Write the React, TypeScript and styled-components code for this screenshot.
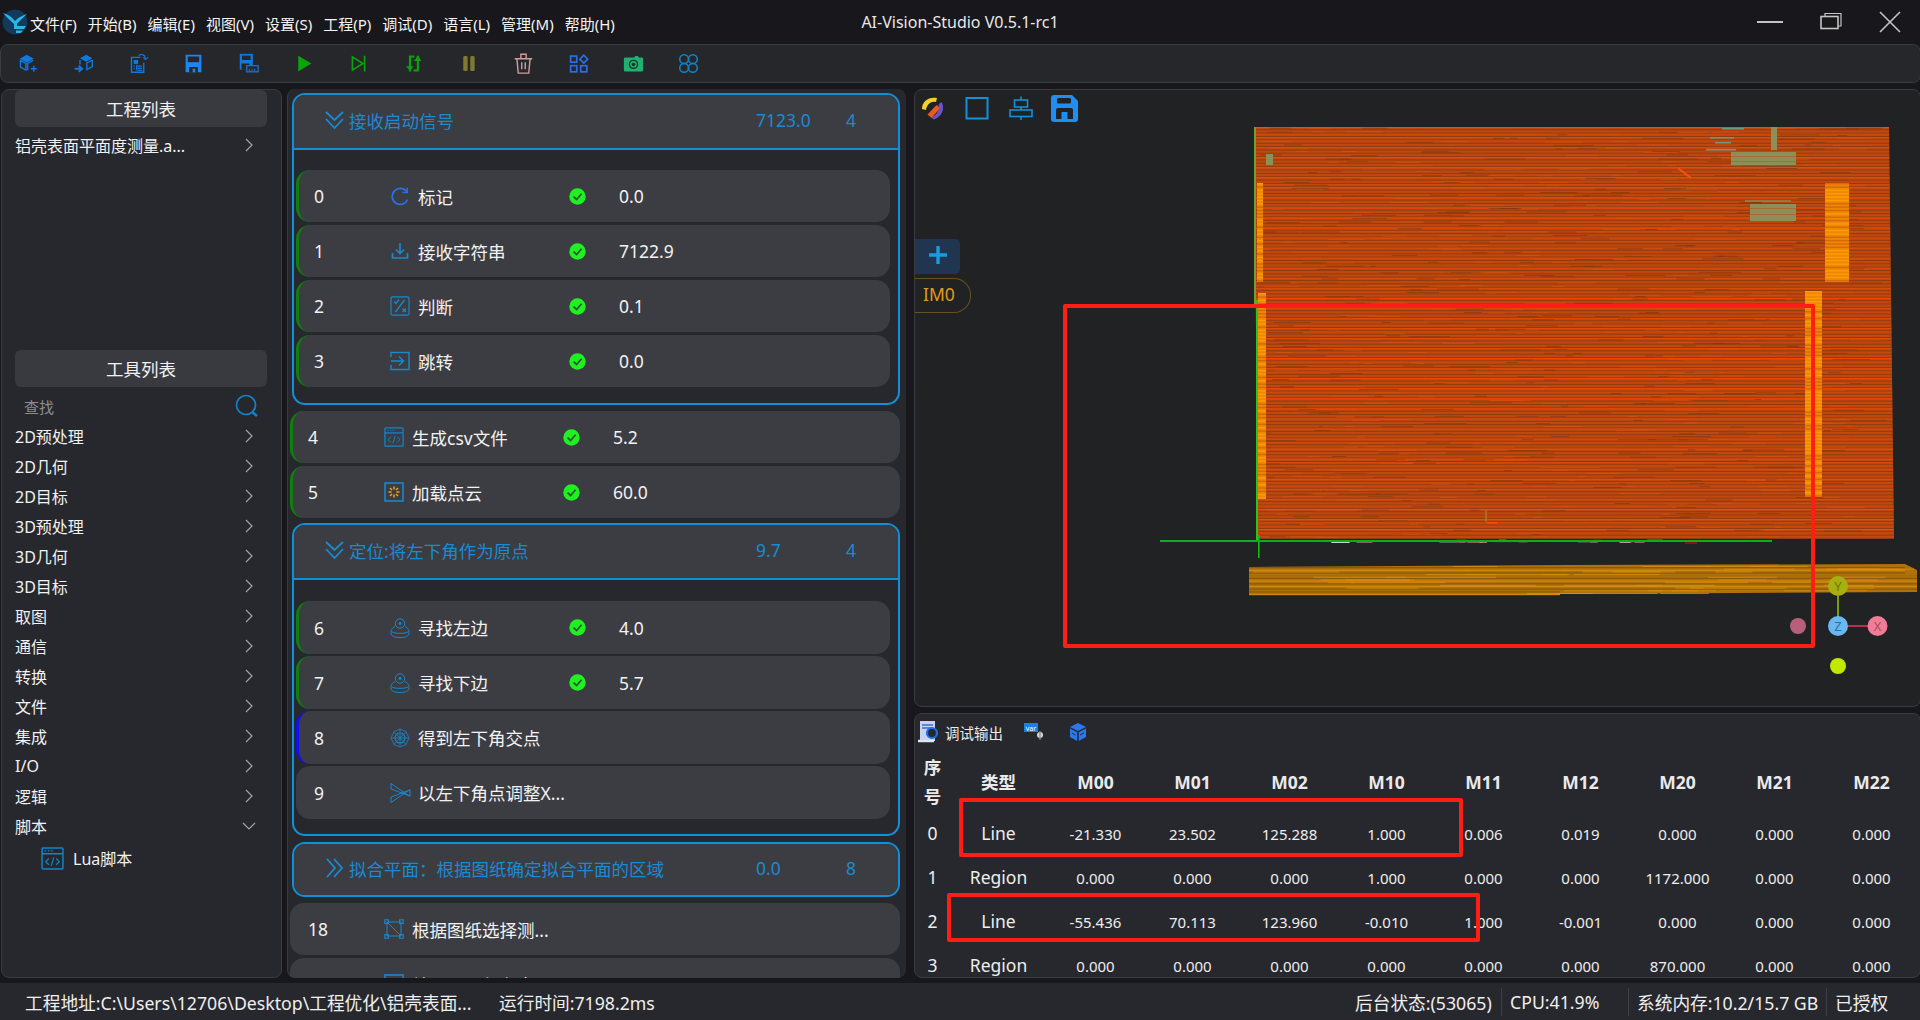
import React, { useMemo } from "react";
import styled, { createGlobalStyle } from "styled-components";

const Global = createGlobalStyle`
  html, body { margin: 0; padding: 0; background: #17171c; overflow: hidden; }
  * { box-sizing: border-box; }
  body { font-family: "Noto Sans", "Noto Sans CJK SC", sans-serif; color: #f2f2f2; }
`;

const Root = styled.div`
  width: 1920px; height: 1020px; display: flex; flex-direction: column; background: #17171c; overflow: hidden;
`;
const TitleBar = styled.header`
  height: 44px; display: grid; grid-template-columns: 1fr auto 1fr; align-items: center; position: relative;
`;
const Brand = styled.div`
  display: flex; align-items: center; padding-left: 2px; gap: 2px;
`;
const Menu = styled.nav`
  display: flex; gap: 11px; font-size: 15px; line-height: 20px; color: #f4f4f4; padding-top: 3px; white-space: nowrap;
`;
const AppTitle = styled.div`
  font-size: 16px; color: #e8e8e8; margin-top: -1px; white-space: nowrap;
`;
const WindowButtons = styled.div`
  display: flex; justify-content: flex-end; align-items: center;
`;
const WinBtn = styled.svg`
  display: block; width: 60px; height: 24px; fill: none; stroke: #c4c4c4;
`;
const Toolbar = styled.div`
  height: 39px; display: flex; align-items: center; background: #26272b; border: 1px solid #3a3b40; border-radius: 8px; margin-right: -1px;
`;
const ToolSlot = styled.div`
  width: 55px; height: 24px; display: flex; align-items: center; justify-content: center; flex: none;
  svg { width: 21px; height: 21px; }
`;
const Main = styled.main`
  margin-top: 6px; height: 889px; display: flex; padding-left: 1px;
`;
const LeftPanel = styled.aside`
  width: 281px; height: 100%; flex: none; background: #27282d; border: 1px solid #3a3b40; border-radius: 8px; padding: 0 13px; overflow: hidden;
`;
const SectionHead = styled.div<{ $top?: number }>`
  height: 37px; margin-top: ${p => p.$top ?? 0}px; width: 252px; background: #393a40; border-radius: 6px; display: flex; align-items: center; justify-content: center; font-size: 17.5px;
`;
const NavRow = styled.div`
  height: 30px; width: 252px; display: flex; align-items: center; justify-content: space-between; font-size: 16px; padding-right: 13px; white-space: nowrap;
`;
const ProjectRow = styled(NavRow)`
  margin-top: 3px;
`;
const SearchRow = styled.div`
  height: 34px; width: 252px; display: flex; align-items: center; justify-content: space-between; padding: 4px 8px 0 9px; color: #8e8e8e; font-size: 15px;
`;
const SubRow = styled.div`
  height: 34px; display: flex; align-items: center; gap: 9px; padding-left: 26px; font-size: 16px;
`;
const Chevron = styled.svg`
  width: 10px; height: 16px; fill: none; stroke: #a2a2a2; stroke-width: 1.2; flex: none;
`;
const ChevronDown = styled.svg`
  width: 14px; height: 10px; fill: none; stroke: #a2a2a2; stroke-width: 1.2; flex: none; margin-right: -2px;
`;
const Middle = styled.section`
  margin-left: 5px; width: 619px; height: 100%; flex: none; background: #27282d; border-radius: 8px; border-left: 1px solid #3a3b40; padding: 4px 0 0 4px; overflow: hidden; display: flex; flex-direction: column; gap: 6px;
`;
const Group = styled.div`
  width: 608px; flex: none; border: 2px solid #1190d8; border-radius: 13px; overflow: hidden;
`;
const GroupHead = styled.div<{ $closed?: boolean }>`
  height: ${p => (p.$closed ? 51 : 55)}px; display: grid; grid-template-columns: 31px 24px 407px 90px 1fr; align-items: center; background: #3c3d42; color: #1a8ad2; font-size: 17.5px; white-space: nowrap; padding-bottom: 3px;
  border-bottom: ${p => (p.$closed ? "none" : "2px solid #1190d8")};
`;
const DoubleChevron = styled.svg`
  grid-column: 2; width: 19px; height: 20px; fill: none; stroke: #1a8ad2; stroke-width: 1.8;
`;
const GroupBody = styled.div<{ $gap: number; $pt: number; $pb: number }>`
  padding: ${p => p.$pt}px 8px ${p => p.$pb}px 2px; display: flex; flex-direction: column; gap: ${p => p.$gap}px;
`;
const RowStack = styled.div`
  margin-left: -2px; display: flex; flex-direction: column; gap: 3px; margin-bottom: -1px; flex: none; width: 610px;
`;
const Row = styled.div<{ $accent?: string; $h?: number }>`
  height: ${p => p.$h ?? 52}px; flex: none; display: grid; grid-template-columns: 91px 28px 151px 50px 1fr; align-items: center; background: #3c3d42; border-radius: 14px; border-left: 3px solid ${p => p.$accent ?? "transparent"}; font-size: 17.5px; white-space: nowrap;
`;
const RowIndex = styled.div`
  padding-left: 15px;
`;
const RowIconBox = styled.div`
  display: flex; align-items: center;
`;
const Viewer = styled.section`
  margin-left: 8px; height: 618px; background: #212224; border: 1px solid #3a3b40; border-radius: 8px; position: relative; overflow: hidden; margin-right: -1px;
`;
const Cloud = styled.svg`
  position: absolute; left: -1px; top: -1px; width: 1006px; height: 618px;
`;
const ViewerTools = styled.div`
  position: relative; display: flex; align-items: center; gap: 20px; height: 28px; margin-top: 4px; padding-left: 6px;
`;
const SaveSlot = styled.div`
  margin-left: -2px;
`;
const PlusBtn = styled.div`
  position: relative; width: 45px; height: 35px; margin-top: 117px; padding-bottom: 4px; background: #1f3550; border-radius: 0 5px 5px 0; display: flex; align-items: center; justify-content: center;
`;
const ImTag = styled.div`
  position: relative; width: 56px; height: 35px; margin-top: 4px; padding: 0 0 3px 8px; border: 1px solid #6b4f22; border-left: none; border-radius: 0 17px 17px 0; color: #e09a20; font-size: 17.5px; display: flex; align-items: center;
`;
const Annotation = styled.div<{ $l: number; $t: number; $w: number; $h: number }>`
  position: absolute; left: ${p => p.$l}px; top: ${p => p.$t}px; width: ${p => p.$w}px; height: ${p => p.$h}px; border: 4px solid #ff1e14; border-radius: 2px; pointer-events: none;
`;
const Right = styled.div`
  flex: 1; min-width: 0; display: flex; flex-direction: column; gap: 6px;
`;
const DebugPanel = styled.section`
  margin-left: 8px; margin-right: -1px; height: 265px; background: #27282d; border: 1px solid #3a3b40; border-radius: 8px; position: relative; overflow: hidden;
`;
const DebugHead = styled.div`
  height: 39px; display: flex; align-items: center; padding: 0 0 3px 2px; font-size: 14.5px; color: #ececec;
`;
const DebugLabel = styled.span`
  margin-left: 4px; margin-right: 20px;
`;
const DebugGap = styled.div`
  width: 20px;
`;
const DataGrid = styled.div`
  display: grid; grid-template-columns: 35px repeat(10, 97px); grid-template-rows: 58px; grid-auto-rows: 44px;
`;
const HeadCell = styled.div`
  display: flex; align-items: center; justify-content: center; text-align: center; font-size: 17.5px; font-weight: 700; line-height: 29px; color: #eaeaea;
`;
const IndexHead = styled(HeadCell)`
  width: 20px; justify-self: center;
`;
const LabelCell = styled.div`
  display: flex; align-items: center; justify-content: center; font-size: 17.5px; color: #eeeeee;
`;
const NumCell = styled.div`
  display: flex; align-items: center; justify-content: center; font-size: 15px; padding-top: 1px; color: #eeeeee;
`;
const StatusBar = styled.footer`
  margin-top: 5px; height: 37px; background: #27282d; display: flex; align-items: center; font-size: 17.7px; color: #efefef; white-space: nowrap;
`;
const StatusLeft = styled.div<{ $w: number; $pl: number }>`
  width: ${p => p.$w}px; padding-left: ${p => p.$pl}px; flex: none; overflow: hidden;
`;
const StatusItem = styled.div<{ $w: number; $sep?: boolean }>`
  width: ${p => p.$w}px; flex: none; height: 28px; display: flex; align-items: center; padding-left: 8px; border-right: ${p => (p.$sep ? "1px solid #3e3f44" : "none")};
`;
const Spacer = styled.div`
  flex: 1;
`;

const IconSvg = styled.svg`
  display: block; flex: none; fill: none;
`;
const Svg: React.FC<{ w?: number; h?: number; vb?: string; children: React.ReactNode }> = ({ w = 24, h = 24, vb, children }) => (
  <IconSvg width={w} height={h} viewBox={vb ?? `0 0 ${w} ${h}`}>{children}</IconSvg>
);

const BLUE = "#1178e0";
const Logo = () => (
  <Svg w={26} h={26}>
    <circle cx="13" cy="13" r="12.5" fill="#123a5c" />
    <path d="M1 4 C5 5 9 7 13 12 C17 8 21 6 25 5 C21 9 17 12 15 15 L15 17 L24 17 L22 20 L12 20 L12 15 C8 11 4 8 1 4Z" fill="#2bb4e6" />
    <path d="M14 21.5 H21 L19 24 H14Z" fill="#2bb4e6" />
  </Svg>
);
const CubePlus = () => (
  <Svg>
    <path d="M10 2 L18 6.5 L10 11 L2 6.5Z" fill={BLUE} />
    <path d="M2.8 8.5 V16 L9 19.6 V12Z M17.2 8.5 L11 12 V19.6" stroke={BLUE} strokeWidth="1.6" />
    <path d="M18 14.5 V21.5 M14.5 18 H21.5" stroke={BLUE} strokeWidth="1.6" />
  </Svg>
);
const CubeArrow = () => (
  <Svg>
    <path d="M15 2 L22 6 L15 10 L8 6Z" fill={BLUE} />
    <path d="M8 8 V13 M22 8 V15.5 L15.8 19 V11.5 L22 8" stroke={BLUE} strokeWidth="1.6" />
    <path d="M2 18 H9 M6.5 14.5 L10.5 18 L6.5 21.5" stroke={BLUE} strokeWidth="2.2" />
  </Svg>
);
const DocSwap = () => (
  <Svg>
    <path d="M14 5 H4 V22 H18 V11" stroke={BLUE} strokeWidth="1.6" />
    <rect x="6.5" y="8" width="5" height="4.5" fill={BLUE} />
    <path d="M6.5 15 H8 M10 13.5 V20 M11 15 H16 M11 17.5 H16 M11 20 H16 M6.5 18 H8" stroke={BLUE} strokeWidth="1.4" />
    <path d="M12 3 C15 1 19 1 20 6 M17.5 5 L20 7.5 L23 5" stroke={BLUE} strokeWidth="1.3" />
  </Svg>
);
const Floppy = () => (
  <Svg>
    <path d="M3 2 H21 V22 H3Z" fill="#1a86f0" />
    <rect x="5.5" y="4" width="13" height="6.5" fill="#26272b" />
    <path d="M7 16 H17 V22 H7Z" fill="#26272b" />
    <rect x="11" y="18" width="3" height="4" fill="#1a86f0" />
  </Svg>
);
const FloppyRuler = () => (
  <Svg>
    <path d="M2 1 H17 V19 H2Z" fill={BLUE} />
    <rect x="4.5" y="3" width="10" height="5" fill="#26272b" />
    <rect x="4" y="12" width="9" height="7" fill="#26272b" />
    <rect x="10" y="14.5" width="13" height="7" fill="#26272b" stroke={BLUE} strokeWidth="1.4" />
    <path d="M13 18 V21 M16 18 V21 M19 18 V21" stroke={BLUE} strokeWidth="1.2" />
  </Svg>
);
const Play = () => (<Svg><path d="M6 3 L21 12 L6 21Z" fill="#0ba50b" /></Svg>);
const Step = () => (<Svg><path d="M5 4.5 L17 12 L5 19.5Z M19 3 V21" stroke="#0ba50b" strokeWidth="1.8" /></Svg>);
const Swap = () => (
  <Svg>
    <path d="M8 21 V4 H13 M17 3 V20 H12" stroke="#0ba50b" strokeWidth="2.4" />
    <path d="M3.5 15 L8 20.5 L12 15Z M12.5 9 L17 3 L21 9Z" fill="#0ba50b" />
  </Svg>
);
const Pause = () => (<Svg><rect x="6" y="3.5" width="5" height="17" rx="1.5" fill="#807a2c" /><rect x="14" y="3.5" width="5" height="17" rx="1.5" fill="#807a2c" /></Svg>);
const Trash = () => (
  <Svg>
    <path d="M2 6.5 H22 M9 6 V1.5 H15 V6 M4.5 7 L6 23 H18 L19.5 7 M10 10.5 V18.5 M14 10.5 V18.5" stroke="#d69c9c" strokeWidth="1.6" />
  </Svg>
);
const Apps = () => (
  <Svg>
    <g stroke="#2a6fe8" strokeWidth="1.9">
      <rect x="3" y="3.5" width="7" height="7" /><rect x="3" y="14.5" width="7" height="7" /><rect x="14.5" y="14.5" width="7" height="7" />
      <path d="M18 2.5 L22.5 7 L18 11.5 L13.5 7Z" />
    </g>
  </Svg>
);
const Camera = () => (
  <Svg>
    <path d="M3 5 H13 L14 3.5 H17 L18 5 H21 Q23 5 23 6 V20 Q23 21 21 21 H3 Q1 21 1 20 V6 Q1 5 3 5Z" fill="#20b070" />
    <circle cx="12" cy="13" r="4.6" stroke="#17322a" strokeWidth="1.6" />
    <circle cx="12" cy="13" r="2" fill="#17322a" />
  </Svg>
);
const Petals = () => (
  <Svg>
    <g stroke="#1283c8" strokeWidth="1.8">
      <circle cx="7" cy="7" r="5" /><circle cx="17" cy="7" r="5" /><circle cx="7" cy="17" r="5" /><circle cx="17" cy="17" r="5" />
    </g>
  </Svg>
);

const Search = () => (
  <Svg w={24} h={25}>
    <circle cx="11" cy="11" r="9.5" stroke="#1084c8" strokeWidth="1.7" />
    <path d="M17 18 L22 22" stroke="#1084c8" strokeWidth="2.6" />
  </Svg>
);
const CodeWindow: React.FC<{ size?: number }> = ({ size = 22 }) => (
  <Svg w={size} h={size} vb="0 0 22 22">
    <rect x="1" y="1" width="20" height="20" rx="1" stroke="#1086cc" strokeWidth="1.4" />
    <path d="M1 6.5 H21" stroke="#1086cc" strokeWidth="1.4" />
    <path d="M3.5 3.7 H5 M6.5 3.7 H8 M9.5 3.7 H11" stroke="#1086cc" />
    <path d="M7.5 11 L4.5 14 L7.5 17 M14.5 11 L17.5 14 L14.5 17 M12.2 10 L9.8 18" stroke="#1086cc" strokeWidth="1.1" />
  </Svg>
);

const R = "#1a88cc";
const IconRefresh = () => (
  <Svg w={20} h={20}>
    <path d="M16.5 5.5 A8 8 0 1 0 17.6 13.5" stroke="#2b6fe8" strokeWidth="1.7" />
    <path d="M17.2 1.8 V6.6 H12.4" stroke="#2b6fe8" strokeWidth="1.5" />
  </Svg>
);
const IconDownload = () => (
  <Svg w={20} h={20}>
    <path d="M10 2 V12 M6 8.5 L10 12.5 L14 8.5" stroke={R} strokeWidth="1.7" />
    <path d="M2.5 12 V17 H17.5 V12" stroke={R} strokeWidth="1.7" />
  </Svg>
);
const IconPercent = () => (
  <Svg w={20} h={20}>
    <rect x="1" y="0.8" width="18" height="18.4" rx="1.5" stroke={R} strokeWidth="1.2" />
    <path d="M4 5.5 L6 7.5 L9 3.5 M14.5 4 L5.5 16 M12.5 12.5 L16 16 M16 12.5 L12.5 16" stroke={R} strokeWidth="1.3" />
  </Svg>
);
const IconEnter = () => (
  <Svg w={20} h={20}>
    <path d="M1 6 V1.5 H19 V18.5 H1 V14" stroke={R} strokeWidth="1.4" />
    <path d="M1 10 H13 M9 5.5 L13.5 10 L9 14.5" stroke={R} strokeWidth="1.5" />
  </Svg>
);
const IconLoader = () => (
  <Svg w={20} h={20}>
    <rect x="1" y="1" width="18" height="18" stroke={R} strokeWidth="1.6" />
    <path d="M10 4.5 V7.5 M10 12.5 V15.5 M4.5 10 H7.5 M12.5 10 H15.5 M6 6 L8 8 M12 12 L14 14 M14 6 L12 8 M8 12 L6 14" stroke="#f0a020" strokeWidth="1.5" />
  </Svg>
);
const IconWebcam = () => (
  <Svg w={20} h={20}>
    <circle cx="10" cy="5.5" r="4.7" stroke={R} />
    <circle cx="10" cy="5.5" r="1.4" fill={R} />
    <path d="M5 8.5 C1 10.5 1 13 1 15 C1 18 4 19.5 10 19.5 C16 19.5 19 18 19 15 C19 13 19 10.5 15 8.5 M1.5 13.5 C4 16 16 16 18.5 13.5" stroke={R} />
  </Svg>
);
const IconMesh = () => (
  <Svg w={20} h={20}>
    <path d="M10 1 L16 3.5 L19 10 L16 16.5 L10 19 L4 16.5 L1 10 L4 3.5Z M4 3.5 L16 16.5 M16 3.5 L4 16.5 M1 10 L19 10 M10 1 L10 19" stroke={R} strokeWidth="0.8" />
    <circle cx="10" cy="10" r="5" stroke={R} strokeWidth="1.1" />
  </Svg>
);
const IconCross = () => (
  <Svg w={21} h={20}>
    <path d="M1 0.5 L20 13.5 M1 19.5 L20 6.5 M1 6 L20 13 M1 14 L20 7 M1 0.5 V6 M1 14 V19.5 M20 6.5 V13.5" stroke={R} strokeWidth="1" />
  </Svg>
);
const IconPoly = () => (
  <Svg w={20} h={20}>
    <path d="M3 3 H17 V17 H3Z M3 3 L17 17" stroke={R} strokeWidth="1" />
    <g stroke={R} strokeWidth="1.1"><rect x="0.8" y="0.8" width="3.6" height="3.6" /><rect x="15.6" y="0.8" width="3.6" height="3.6" /><rect x="0.8" y="15.6" width="3.6" height="3.6" /><rect x="15.6" y="15.6" width="3.6" height="3.6" /></g>
  </Svg>
);
const IconBoxBlank = () => (
  <Svg w={20} h={20}>
    <rect x="1" y="1" width="18" height="18" stroke={R} strokeWidth="1.6" />
    <path d="M1 5 H19" stroke={R} strokeWidth="1.4" />
  </Svg>
);
const Check = () => (
  <Svg w={17} h={17}>
    <circle cx="8.5" cy="8.5" r="8.2" fill="#20f022" />
    <path d="M4.6 8.6 L7.6 11.6 L12.6 5.8" stroke="#25552a" strokeWidth="1.7" />
  </Svg>
);

const ViewerLogo = () => (
  <Svg w={24} h={24}>
    <path d="M1 13 C1 5 8 0.5 16 2 L15 6 C10 5 6 8 5 14Z" fill="#f6cf28" />
    <path d="M6.5 18.5 L15.5 9 L19.5 12 L10.5 22Z" fill="#ea5a1c" />
    <path d="M20.5 6 C24.5 13 20.5 21 12.5 23.5 L10.5 21.5 C16 19 19 14 17.5 8.5Z" fill="#6a55c8" />
  </Svg>
);
const ViewSquare = () => (<Svg><rect x="1.5" y="2" width="21" height="20.5" stroke="#1290d8" strokeWidth="2" /></Svg>);
const ViewAlign = () => (
  <Svg>
    <path d="M12 0.5 V24" stroke="#1290d8" strokeWidth="1.6" />
    <rect x="5.5" y="4" width="13" height="7" fill="#212224" stroke="#1290d8" strokeWidth="1.6" />
    <rect x="1" y="14" width="22" height="6.5" fill="#212224" stroke="#1290d8" strokeWidth="1.6" />
  </Svg>
);
const ViewSave = () => (
  <Svg w={27} h={27} vb="0 0 27 27">
    <path d="M3 0 H21 L27 6 V24 Q27 27 24 27 H3 Q0 27 0 24 V3 Q0 0 3 0Z" fill="#1e8ef0" />
    <rect x="6" y="3" width="14" height="5.5" rx="1.5" fill="#212224" />
    <path d="M5 24 V15 Q5 13 7 13 H20 Q22 13 22 15 V24 H16.5 V17 H10.5 V24Z" fill="#212224" />
  </Svg>
);

function rng(seed: number) {
  let s = seed;
  return () => {
    s = (s * 1664525 + 1013904223) >>> 0;
    return s / 4294967296;
  };
}

const PointCloud = () => {
  const marks = useMemo(() => {
    const r = rng(42);
    const items: React.ReactNode[] = [];
    let key = 0;
    const bar = (x: number, y: number, w: number, h: number, c: string, o = 1) => {
      items.push(<rect key={key++} x={x} y={y} width={w} height={h} fill={c} opacity={o} />);
    };
    // main plate: regular scan lines
    let n = 0;
    for (let y = 127; y < 537; y += 3.35) {
      const l = 1254 + (y - 127) * 0.012;
      const rr = 1889 + (y - 127) * 0.012;
      const t = r();
      bar(l, y + 2.3, rr - l, 1, "#8e3c12");
      if (n % 3 === 0) bar(l, y, rr - l, 1, t < 0.45 ? "#ff4800" : "#e24c08", 0.95);
      else if (t < 0.3) bar(l, y, rr - l, 1, "#d04a0c", 0.9);
      for (let i = 0; i < 6; i++) {
        const sx = l + r() * (rr - l - 40);
        const sw = 6 + r() * 36;
        bar(sx, y + (r() < 0.5 ? 0.8 : 1.5), sw, 0.8, r() < 0.5 ? "#d8540e" : "#7c3410", 0.7);
      }
      n++;
    }
    // orange strips
    const strip = (x: number, y0: number, y1: number, w: number) => {
      bar(x, y0, w, y1 - y0, "#ee8606");
      for (let y = y0; y < y1; y += 3.35) bar(x, y, w, 1.4, r() < 0.6 ? "#ff9c00" : "#d86a06");
    };
    strip(1257, 183, 282, 6);
    strip(1258, 293, 499, 8);
    strip(1825, 183, 282, 24);
    strip(1805, 291, 497, 17);
    // features
    bar(1731, 152, 65, 13, "#8c8f58");
    bar(1750, 204, 46, 17, "#8c8f58");
    bar(1745, 200, 46, 2, "#8c8f58", 0.7);
    bar(1771, 127, 6, 23, "#8c8f58");
    bar(1266, 154, 7, 11, "#8c8f58");
    for (const [x, y, w] of [[1722, 128, 22], [1710, 137, 24], [1706, 149, 30], [1715, 142, 16]] as number[][]) bar(x, y, w, 1.5, "#6e9a80");
    for (const [x, y, w] of [[1731, 156, 65], [1731, 161, 65], [1750, 208, 46], [1750, 214, 46]] as number[][]) bar(x, y, w, 1, "#b85a24", 0.7);
    items.push(<path key={key++} d="M1678 168 L1691 178" stroke="#ff5000" strokeWidth="2" />);
    items.push(<path key={key++} d="M1486 510 V522" stroke="#b88020" strokeWidth="1.2" />);
    bar(1487, 522, 10, 1.5, "#ff5000");
    // lower band
    const band: string[] = ["#d08a0e", "#8a5a0a", "#a86c08", "#8a5a0a"];
    for (let y = 566; y < 594; y += 2.7) {
      const start = 1249;
      const end = y < 572 ? 1905 : 1917;
      bar(start, y + 1, (y > 588 ? 1560 : end) - start, 1.2, band[Math.floor(r() * 4)]);
      for (let i = 0; i < 4; i++) {
        bar(start + r() * 600, y, 20 + r() * 90, 1, "#e0920f", 0.7);
      }
    }
    // dirt along the base line
    for (let i = 0; i < 30; i++) bar(1330 + r() * 320, 539.5 + r() * 2.5, 6 + r() * 14, 1.2, r() < 0.5 ? "#ffffff" : "#d8a080", 0.8);
    return items;
  }, []);
  return (
    <Cloud viewBox="914 89 1006 618">
      <polygon points="1254,127 1889,127 1894,538 1258,538" fill="#c0480e" />
      <polygon points="1249,567 1570,565 1905,564 1917,570 1917,592 1560,594 1249,595" fill="#b0700a" />
      {marks}
      <rect x="1254" y="127" width="2" height="180" fill="#6ea030" />
      <rect x="1256" y="300" width="2" height="240" fill="#30c020" />
      <rect x="1258" y="535" width="1.6" height="23" fill="#10c010" />
      <rect x="1160" y="540" width="612" height="2" fill="#08b020" />
      <rect x="1685" y="542" width="12" height="2" fill="#901010" />
      <path d="M1838 596 V626" stroke="#7a9a10" strokeWidth="2" />
      <path d="M1838 626 H1877" stroke="#b83050" strokeWidth="2" />
      <circle cx="1838" cy="586" r="10" fill="#a8b010" />
      <circle cx="1838" cy="626" r="10" fill="#6ab8f0" />
      <circle cx="1877.5" cy="626" r="10" fill="#f07d98" />
      <circle cx="1798" cy="626" r="8" fill="#b8607a" />
      <circle cx="1838" cy="666" r="8" fill="#c0e800" />
      <text x="1838" y="591" fontSize="13" textAnchor="middle" fill="#6e7410">Y</text>
      <text x="1838" y="631" fontSize="13" textAnchor="middle" fill="#2e6ea0">Z</text>
      <text x="1877.5" y="631" fontSize="13" textAnchor="middle" fill="#a84a60">X</text>
    </Cloud>
  );
};

const menu = ["文件(F)", "开始(B)", "编辑(E)", "视图(V)", "设置(S)", "工程(P)", "调试(D)", "语言(L)", "管理(M)", "帮助(H)"];
const tools = ["2D预处理", "2D几何", "2D目标", "3D预处理", "3D几何", "3D目标", "取图", "通信", "转换", "文件", "集成", "I/O", "逻辑"];
const toolbarIcons = [CubePlus, CubeArrow, DocSwap, Floppy, FloppyRuler, Play, Step, Swap, Pause, Trash, Apps, Camera, Petals];

const heads = ["类型", "M00", "M01", "M02", "M10", "M11", "M12", "M20", "M21", "M22"];
const tableRows: [string, string, string[]][] = [
  ["0", "Line", ["-21.330", "23.502", "125.288", "1.000", "0.006", "0.019", "0.000", "0.000", "0.000"]],
  ["1", "Region", ["0.000", "0.000", "0.000", "1.000", "0.000", "0.000", "1172.000", "0.000", "0.000"]],
  ["2", "Line", ["-55.436", "70.113", "123.960", "-0.010", "1.000", "-0.001", "0.000", "0.000", "0.000"]],
  ["3", "Region", ["0.000", "0.000", "0.000", "0.000", "0.000", "0.000", "870.000", "0.000", "0.000"]],
];

const RightArrow = () => (<Chevron viewBox="0 0 10 16"><path d="M2 2 L8 8 L2 14" /></Chevron>);

const FlowRow: React.FC<{ i: string; icon: React.ReactNode; name: string; val?: string; accent?: string; h?: number }> = ({ i, icon, name, val, accent, h }) => (
  <Row $accent={accent} $h={h}>
    <RowIndex>{i}</RowIndex>
    <RowIconBox>{icon}</RowIconBox>
    <div>{name}</div>
    <RowIconBox>{val ? <Check /> : null}</RowIconBox>
    <div>{val}</div>
  </Row>
);

const GREEN = "#0f7d0f";

const GroupTitle: React.FC<{ closed?: boolean; title: string; time: string; n: string }> = ({ closed, title, time, n }) => (
  <GroupHead $closed={closed}>
    <DoubleChevron viewBox="0 0 19 20">
      {closed
        ? <path d="M2 1 L10 10 L2 19 M9 1 L17 10 L9 19" />
        : <path d="M1 2 L9.5 10 L18 2 M1 9 L9.5 18 L18 9" />}
    </DoubleChevron>
    <div>{title}</div>
    <div>{time}</div>
    <div>{n}</div>
  </GroupHead>
);

export default function App() {
  return (
    <Root>
      <Global />
      <TitleBar>
        <Brand>
          <Logo />
          <Menu>{menu.map(m => <span key={m}>{m}</span>)}</Menu>
        </Brand>
        <AppTitle>AI-Vision-Studio V0.5.1-rc1</AppTitle>
        <WindowButtons>
          <WinBtn viewBox="0 0 60 24"><path d="M17 12 H43" strokeWidth="2" /></WinBtn>
          <WinBtn viewBox="0 0 60 24"><path d="M25 6 V3.5 H41 V16 H38" strokeWidth="1.2" /><rect x="21" y="6.5" width="17" height="12" strokeWidth="1.6" /></WinBtn>
          <WinBtn viewBox="0 0 60 24"><path d="M20 2 L40 22 M40 2 L20 22" strokeWidth="1.6" /></WinBtn>
        </WindowButtons>
      </TitleBar>
      <Toolbar>
        {toolbarIcons.map((I, k) => <ToolSlot key={k}><I /></ToolSlot>)}
      </Toolbar>
      <Main>
        <LeftPanel>
          <SectionHead>工程列表</SectionHead>
          <ProjectRow><span>铝壳表面平面度测量.a...</span><RightArrow /></ProjectRow>
          <SectionHead $top={190}>工具列表</SectionHead>
          <SearchRow><span>查找</span><Search /></SearchRow>
          {tools.map(t => <NavRow key={t}><span>{t}</span><RightArrow /></NavRow>)}
          <NavRow><span>脚本</span><ChevronDown viewBox="0 0 14 10"><path d="M1 2 L7 8 L13 2" /></ChevronDown></NavRow>
          <SubRow><CodeWindow size={23} /><span>Lua脚本</span></SubRow>
        </LeftPanel>
        <Middle>
          <Group>
            <GroupTitle title="接收启动信号" time="7123.0" n="4" />
            <GroupBody $gap={3} $pt={20} $pb={16}>
              <FlowRow i="0" icon={<IconRefresh />} name="标记" val="0.0" accent={GREEN} />
              <FlowRow i="1" icon={<IconDownload />} name="接收字符串" val="7122.9" accent={GREEN} />
              <FlowRow i="2" icon={<IconPercent />} name="判断" val="0.1" accent={GREEN} />
              <FlowRow i="3" icon={<IconEnter />} name="跳转" val="0.0" accent={GREEN} />
            </GroupBody>
          </Group>
          <RowStack>
            <FlowRow i="4" icon={<CodeWindow size={20} />} name="生成csv文件" val="5.2" accent={GREEN} />
            <FlowRow i="5" icon={<IconLoader />} name="加载点云" val="60.0" accent={GREEN} />
          </RowStack>
          <Group>
            <GroupTitle title="定位:将左下角作为原点" time="9.7" n="4" />
            <GroupBody $gap={2} $pt={21} $pb={15}>
              <FlowRow i="6" h={53} icon={<IconWebcam />} name="寻找左边" val="4.0" accent={GREEN} />
              <FlowRow i="7" h={53} icon={<IconWebcam />} name="寻找下边" val="5.7" accent={GREEN} />
              <FlowRow i="8" h={53} icon={<IconMesh />} name="得到左下角交点" accent="#1010f0" />
              <FlowRow i="9" h={53} icon={<IconCross />} name="以左下角点调整X..." />
            </GroupBody>
          </Group>
          <Group>
            <GroupTitle closed title="拟合平面：根据图纸确定拟合平面的区域" time="0.0" n="8" />
          </Group>
          <RowStack>
            <FlowRow i="18" icon={<IconPoly />} name="根据图纸选择测..." />
            <FlowRow i="19" icon={<IconBoxBlank />} name="结果平面保存点" />
          </RowStack>
        </Middle>
        <Right>
          <Viewer>
            <PointCloud />
            <ViewerTools>
              <ViewerLogo /><ViewSquare /><ViewAlign />
              <SaveSlot><ViewSave /></SaveSlot>
            </ViewerTools>
            <PlusBtn>
              <Svg w={20} h={20}><path d="M10 1 V19 M1 10 H19" stroke="#1a9ae0" strokeWidth="3.4" /></Svg>
            </PlusBtn>
            <ImTag>IM0</ImTag>
            <Annotation $l={148} $t={214} $w={752} $h={344} />
          </Viewer>
          <DebugPanel>
            <DebugHead>
              <Svg w={24} h={24}>
                <rect x="3" y="1" width="15" height="20" fill="#c8d4ee" />
                <path d="M5 5 H16 M5 8 H16" stroke="#3c6adf" strokeWidth="1.5" />
                <path d="M1 21 H17" stroke="#dfe6f8" strokeWidth="2.4" />
                <circle cx="15" cy="13" r="5" stroke="#1a70f0" strokeWidth="2.2" fill="#27282d" />
              </Svg>
              <DebugLabel>调试输出</DebugLabel>
              <Svg w={24} h={20}>
                <rect x="1" y="1" width="14" height="9" fill="#1b7fe8" />
                <text x="8" y="8.5" fontSize="7" fill="#fff" textAnchor="middle">var</text>
                <circle cx="17" cy="13" r="3" fill="#d8d8d8" />
                <path d="M17 9 V18" stroke="#8a8a8a" strokeWidth="1.4" />
              </Svg>
              <DebugGap />
              <Svg w={22} h={22}>
                <path d="M11 2 L19 6 L11 10 L3 6Z" fill="#2a78f0" />
                <path d="M3 7.5 L10.2 11.3 V20 L3 16Z M19 7.5 L11.8 11.3 V20 L19 16Z" fill="#2a78f0" />
                <path d="M5 12 L8.5 14 M13 14 L17 12" stroke="#27282d" />
              </Svg>
            </DebugHead>
            <DataGrid>
              <IndexHead>序号</IndexHead>
              {heads.map(h => <HeadCell key={h}>{h}</HeadCell>)}
              {tableRows.map(([idx, type, nums]) => (
                <React.Fragment key={idx}>
                  <LabelCell>{idx}</LabelCell>
                  <LabelCell>{type}</LabelCell>
                  {nums.map((n, k) => <NumCell key={k}>{n}</NumCell>)}
                </React.Fragment>
              ))}
            </DataGrid>
            <Annotation $l={44} $t={84} $w={504} $h={59} />
            <Annotation $l={32} $t={179} $w={533} $h={49} />
          </DebugPanel>
        </Right>
      </Main>
      <StatusBar>
        <StatusLeft $w={499} $pl={25}>工程地址:C:\Users\12706\Desktop\工程优化\铝壳表面...</StatusLeft>
        <div>运行时间:7198.2ms</div>
        <Spacer />
        <StatusItem $w={155} $sep>后台状态:(53065)</StatusItem>
        <StatusItem $w={127} $sep>CPU:41.9%</StatusItem>
        <StatusItem $w={198} $sep>系统内存:10.2/15.7 GB</StatusItem>
        <StatusItem $w={93}>已授权</StatusItem>
      </StatusBar>
    </Root>
  );
}
